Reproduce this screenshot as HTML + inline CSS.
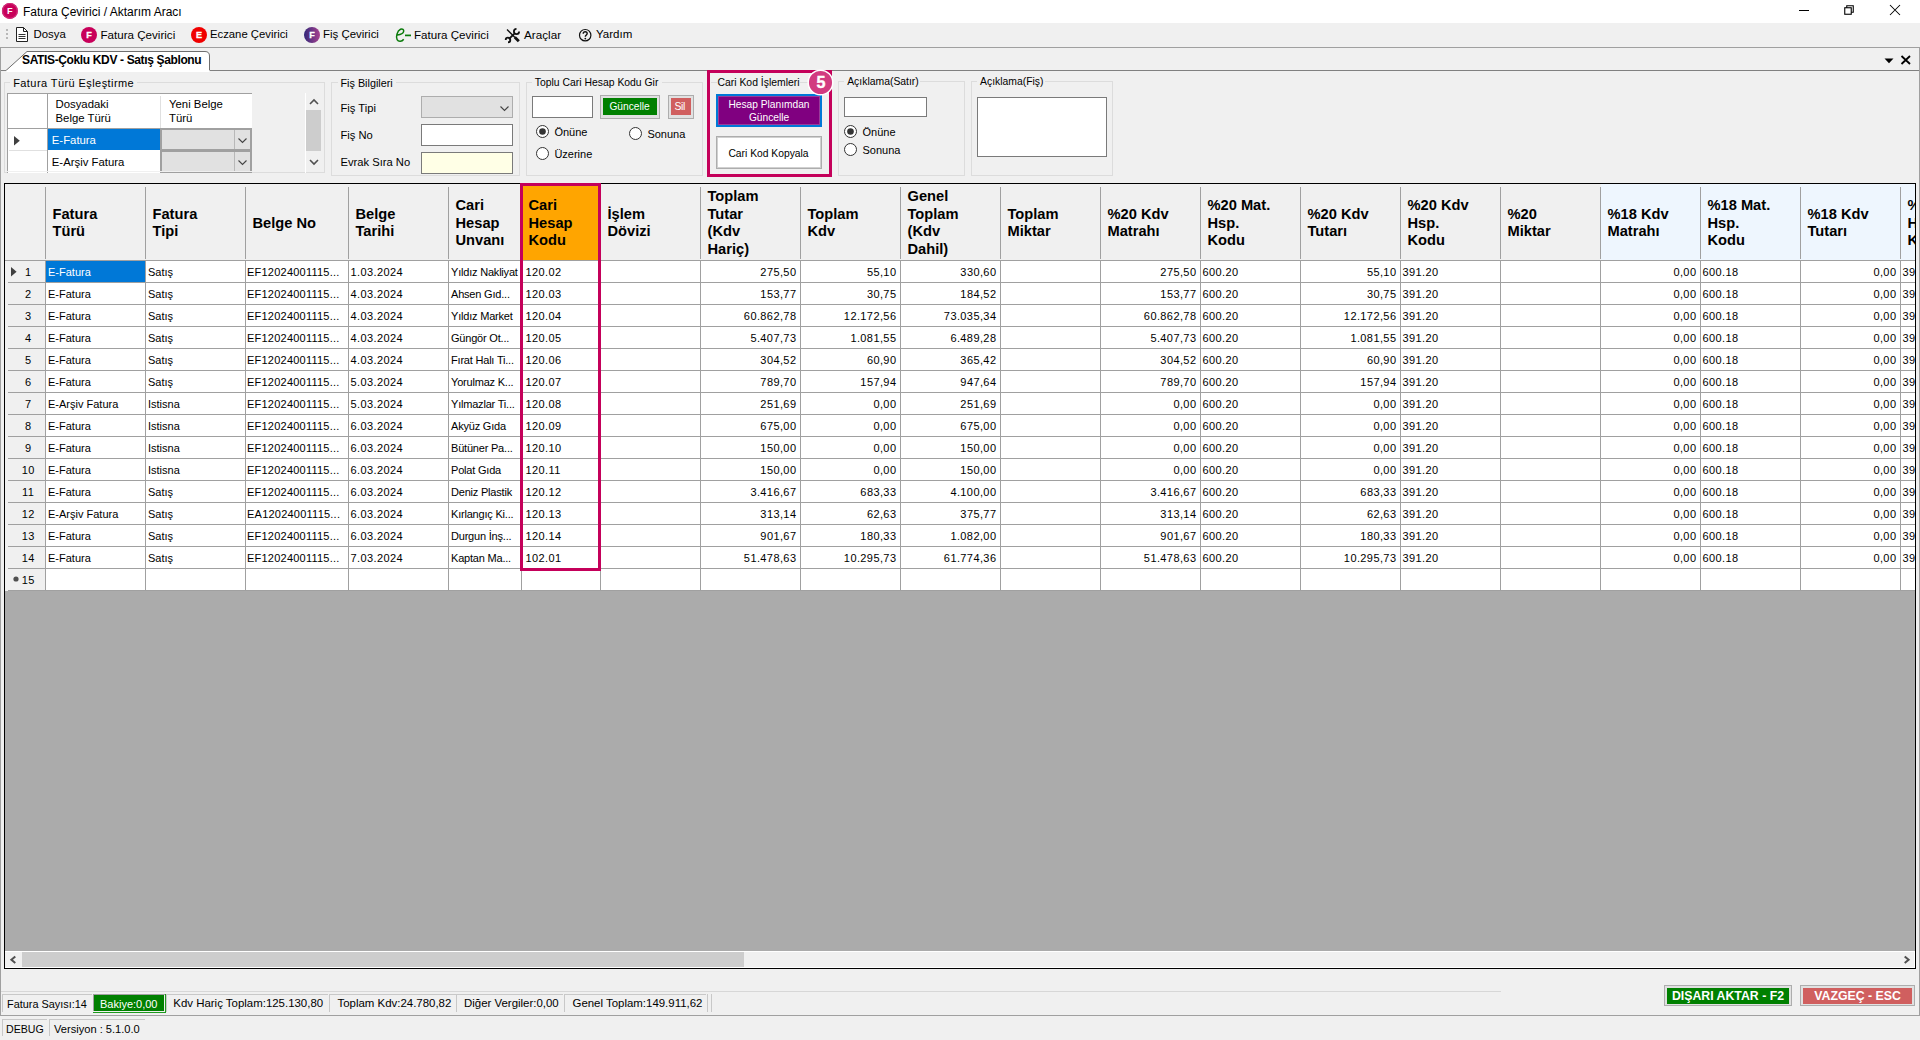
<!DOCTYPE html><html><head><meta charset='utf-8'><title>Fatura Çevirici</title><style>
html,body{margin:0;padding:0;}
body{width:1920px;height:1040px;overflow:hidden;position:relative;background:#F0F0F0;font-family:"Liberation Sans",sans-serif;color:#000;}
.a{position:absolute;}
.t{position:absolute;white-space:nowrap;}
svg{overflow:visible;}
</style></head><body>
<div class=a style='left:0px;top:0px;width:1920px;height:23px;background:#FFFFFF;'></div>
<svg class=a style='left:2px;top:2px' width='17' height='17' viewBox='0 0 17 17'><circle cx='7.9' cy='8.9' r='8' fill='#C8005A'/><circle cx='7.9' cy='8.9' r='7.4' fill='none' stroke='#D0307A' stroke-width='1.2'/><text x='7.9' y='12.3' font-family='Liberation Sans' font-weight='700' font-size='9.2' fill='#fff' text-anchor='middle'>F</text></svg>
<div class=t style='top:3.64px;font-size:12px;line-height:16px;left:23px;'>Fatura Çevirici / Aktarım Aracı</div>
<div class=a style='left:1799px;top:10px;width:10px;height:1px;background:#000;'></div>
<svg class=a style='left:1840px;top:2px' width='18' height='18' viewBox='0 0 18 18'><rect x='4.75' y='5.75' width='6.5' height='6.5' fill='none' stroke='#000' stroke-width='1.1'/><path d='M6.75 5.75V3.75H13.25V10.25H11.25' fill='none' stroke='#000' stroke-width='1.1'/></svg>
<svg class=a style='left:1886px;top:2px' width='18' height='18' viewBox='0 0 18 18'><path d='M4 3L14 13M14 3L4 13' stroke='#000' stroke-width='1.05'/></svg>
<div class=a style='left:6px;top:29px;width:2px;height:2px;background:#B8B8B8;'></div>
<div class=a style='left:6px;top:33px;width:2px;height:2px;background:#B8B8B8;'></div>
<div class=a style='left:6px;top:37px;width:2px;height:2px;background:#B8B8B8;'></div>
<svg class=a style='left:15px;top:26px' width='14' height='18' viewBox='0 0 14 18'><path d='M1.5 1.5H8.5L12.5 5.5V15.5H1.5Z' fill='#fff' stroke='#222'/><path d='M8.5 1.5V5.5H12.5' fill='none' stroke='#222'/><path d='M3.5 8.5H10.5M3.5 10.5H10.5M3.5 12.5H10.5' stroke='#333'/></svg>
<div class=t style='top:27.15px;font-size:11.4px;line-height:15px;left:33.5px;'>Dosya</div>
<svg class=a style='left:80px;top:26px' width='18' height='18' viewBox='0 0 18 18'><circle cx='9' cy='9' r='8' fill='#C8005A'/><text x='9.1' y='12.33' font-family='Liberation Sans' font-weight='700' font-size='9' fill='#fff' stroke='#fff' stroke-width='0.35' text-anchor='middle'>F</text></svg>
<div class=t style='top:27.08px;font-size:11.6px;line-height:15px;left:100.5px;'>Fatura Çevirici</div>
<svg class=a style='left:190px;top:26px' width='18' height='18' viewBox='0 0 18 18'><circle cx='9' cy='9' r='8' fill='#F00000'/><text x='9.1' y='12.33' font-family='Liberation Sans' font-weight='700' font-size='9' fill='#fff' stroke='#fff' stroke-width='0.35' text-anchor='middle'>E</text></svg>
<div class=t style='top:27.18px;font-size:11.3px;line-height:15px;left:210px;'>Eczane Çevirici</div>
<svg class=a style='left:303px;top:26px' width='18' height='18' viewBox='0 0 18 18'><defs><linearGradient id='pg' x1='0' x2='1' y1='0' y2='0'><stop offset='0' stop-color='#33287A'/><stop offset='1' stop-color='#A8428F'/></linearGradient></defs><circle cx='9' cy='9' r='8' fill='url(#pg)'/><text x='9.1' y='12.33' font-family='Liberation Sans' font-weight='700' font-size='9' fill='#fff' stroke='#fff' stroke-width='0.35' text-anchor='middle'>F</text></svg>
<div class=t style='top:27.13px;font-size:11.45px;line-height:15px;left:323px;'>Fiş Çevirici</div>
<svg class=a style='left:395px;top:26px' width='18' height='18' viewBox='0 0 18 18'><path d='M8.7 13.2C7 15.6 3.5 16 2.1 13.6C0.7 11.2 2 4.8 5.5 3.3C7.5 2.6 9.1 3.6 8.6 5.6C8.1 7.6 5.2 8.6 2.4 8.9' fill='none' stroke='#0A7A0A' stroke-width='1.5'/><path d='M10 9.4H16' stroke='#0A7A0A' stroke-width='1.7'/></svg>
<div class=t style='top:27.08px;font-size:11.6px;line-height:15px;left:414px;'>Fatura Çevirici</div>
<svg class=a style='left:505px;top:27px' width='16' height='16' viewBox='0 0 16 16'><path d='M2 2.5L10 10.5' stroke='#111' stroke-width='1.3'/><path d='M9.8 10.3L13.8 14.3' stroke='#111' stroke-width='2.8'/><path d='M3.8 12.2L9.2 6.8' stroke='#111' stroke-width='1.9'/><path d='M14.1 4.5A2.6 2.6 0 1 1 11.5 1.9' fill='none' stroke='#111' stroke-width='1.8'/><path d='M0.7 13A2.3 2.3 0 1 1 3 15.3' fill='none' stroke='#111' stroke-width='1.8'/></svg>
<div class=t style='top:27.04px;font-size:11.7px;line-height:15px;left:524px;'>Araçlar</div>
<svg class=a style='left:577px;top:27px' width='16' height='16' viewBox='0 0 16 16'><circle cx='8.2' cy='8.2' r='5.7' fill='none' stroke='#111' stroke-width='1.2'/><path d='M6.2 6.7C6.2 5.5 7 4.8 8.2 4.8S10.2 5.5 10.2 6.6C10.2 7.9 8.3 8 8.3 9.7' fill='none' stroke='#111' stroke-width='1.4'/><circle cx='8.3' cy='11.6' r='0.9' fill='#111'/></svg>
<div class=t style='top:27.11px;font-size:11.5px;line-height:15px;left:596px;'>Yardım</div>
<div class=a style='left:0px;top:47px;width:1920px;height:1px;background:#A0A0A0;'></div>
<div class=a style='left:0px;top:47px;width:1px;height:969px;background:#A0A0A0;'></div>
<div class=a style='left:1919px;top:47px;width:1px;height:969px;background:#A0A0A0;'></div>
<div class=a style='left:0px;top:1015px;width:1920px;height:1px;background:#A0A0A0;'></div>
<div class=a style='left:1px;top:70px;width:6px;height:1px;background:#808080;'></div>
<div class=a style='left:209px;top:70px;width:1710px;height:1px;background:#808080;'></div>
<svg class=a style='left:5px;top:50px' width='206' height='22' viewBox='0 0 206 22'><path d='M1 20.5L22 1.5H200Q204.5 1.5 204.5 6V20.5' fill='#fff' stroke='#6E6E6E' stroke-width='1'/><rect x='1.5' y='20' width='203' height='2' fill='#fff'/></svg>
<div class=t style='top:51.64px;font-size:12px;line-height:16px;font-weight:700;letter-spacing:-0.36px;left:22px;'>SATIS-Çoklu KDV - Satış Şablonu</div>
<svg class=a style='left:1884px;top:58px' width='10' height='6' viewBox='0 0 10 6'><path d='M0.5 0.5H9.5L5 5.2Z' fill='#000'/></svg>
<svg class=a style='left:1900px;top:55px' width='12' height='10' viewBox='0 0 12 10'><path d='M1.5 1L10 9M10 1L1.5 9' stroke='#000' stroke-width='1.8'/></svg>
<div class=a style='left:4px;top:82px;width:321px;height:91px;box-shadow:inset 0 0 0 1px #DCDCDC;'></div>
<div class=a style='left:10.2px;top:81px;width:127px;height:3px;background:#F0F0F0;'></div>
<div class=t style='top:75.59px;font-size:11px;line-height:14px;letter-spacing:0.42px;left:13.2px;'>Fatura Türü Eşleştirme</div>
<div class=a style='left:331px;top:82px;width:189px;height:94px;box-shadow:inset 0 0 0 1px #DCDCDC;'></div>
<div class=a style='left:337.5px;top:81px;width:58px;height:3px;background:#F0F0F0;'></div>
<div class=t style='top:75.76px;font-size:10.8px;line-height:14px;left:340.5px;'>Fiş Bilgileri</div>
<div class=a style='left:526px;top:82px;width:177px;height:94px;box-shadow:inset 0 0 0 1px #DCDCDC;'></div>
<div class=a style='left:531.8px;top:81px;width:130px;height:3px;background:#F0F0F0;'></div>
<div class=t style='top:75.59px;font-size:10.4px;line-height:14px;left:534.8px;'>Toplu Cari Hesap Kodu Gir</div>
<div class=a style='left:838px;top:81px;width:127px;height:95px;box-shadow:inset 0 0 0 1px #DCDCDC;'></div>
<div class=a style='left:844.2px;top:80px;width:76px;height:3px;background:#F0F0F0;'></div>
<div class=t style='top:75.49px;font-size:10.4px;line-height:14px;left:847.2px;'>Açıklama(Satır)</div>
<div class=a style='left:971px;top:81px;width:142px;height:95px;box-shadow:inset 0 0 0 1px #DCDCDC;'></div>
<div class=a style='left:977px;top:80px;width:68px;height:3px;background:#F0F0F0;'></div>
<div class=t style='top:75.49px;font-size:10.4px;line-height:14px;left:980px;'>Açıklama(Fiş)</div>
<div class=a style='left:711px;top:82px;width:6px;height:1px;background:#DCDCDC;'></div>
<div class=a style='left:800px;top:82px;width:27px;height:1px;background:#DCDCDC;'></div>
<div class=t style='top:76.19px;font-size:10.4px;line-height:14px;left:717.5px;'>Cari Kod İşlemleri</div>
<div class=a style='left:7px;top:93px;width:245px;height:80px;background:#FFFFFF;'></div>
<div class=a style='left:7px;top:93px;width:245px;height:1px;background:#A0A0A0;'></div>
<div class=a style='left:7px;top:93px;width:1px;height:80px;background:#A0A0A0;'></div>
<div class=a style='left:47px;top:94px;width:1px;height:79px;background:#A0A0A0;'></div>
<div class=a style='left:8px;top:128px;width:244px;height:1px;background:#A0A0A0;'></div>
<div class=a style='left:160px;top:96px;width:1px;height:32px;background:#E0E0E0;'></div>
<div class=a style='left:9px;top:150px;width:38px;height:1px;background:#E0E0E0;'></div>
<div class=t style='top:97.16px;font-size:11.35px;line-height:15px;left:55.5px;'>Dosyadaki</div>
<div class=t style='top:110.96px;font-size:11.35px;line-height:15px;left:55.5px;'>Belge Türü</div>
<div class=t style='top:97.16px;font-size:11.35px;line-height:15px;left:169px;'>Yeni Belge</div>
<div class=t style='top:110.96px;font-size:11.35px;line-height:15px;left:169px;'>Türü</div>
<div class=a style='left:48px;top:129px;width:112px;height:21px;background:#0078D7;'></div>
<div class=t style='top:133.16px;font-size:11.35px;line-height:15px;color:#FFFFFF;left:51.8px;'>E-Fatura</div>
<div class=t style='top:154.86px;font-size:11.35px;line-height:15px;left:51.8px;'>E-Arşiv Fatura</div>
<svg class=a style='left:14px;top:136px' width='6' height='10' viewBox='0 0 6 10'><path d='M0 0L5.8 4.8L0 9.6Z' fill='#404040'/></svg>
<div class=a style='left:160px;top:128px;width:92px;height:23px;background:#A0A0A0;'></div>
<div class=a style='left:162px;top:130px;width:88px;height:19px;background:#E1E1E1;'></div>
<div class=a style='left:234px;top:130px;width:1px;height:19px;background:#B8B8B8;'></div>
<svg class=a style='left:238px;top:137.5px' width='9' height='6' viewBox='0 0 9 6'><path d='M0.5 0.5L4.5 4.5L8.5 0.5' fill='none' stroke='#444' stroke-width='1.1'/></svg>
<div class=a style='left:160px;top:150px;width:92px;height:23px;background:#A0A0A0;'></div>
<div class=a style='left:162px;top:152px;width:88px;height:19px;background:#E1E1E1;'></div>
<div class=a style='left:234px;top:152px;width:1px;height:19px;background:#B8B8B8;'></div>
<svg class=a style='left:238px;top:159.5px' width='9' height='6' viewBox='0 0 9 6'><path d='M0.5 0.5L4.5 4.5L8.5 0.5' fill='none' stroke='#444' stroke-width='1.1'/></svg>
<div class=a style='left:7px;top:171px;width:246px;height:1px;background:#F0F0F0;'></div>
<div class=a style='left:305px;top:93px;width:17px;height:79px;background:#F0F0F0;'></div>
<div class=a style='left:305px;top:93px;width:1px;height:80px;background:#FFFFFF;'></div>
<div class=a style='left:306px;top:110px;width:15px;height:41px;background:#CDCDCD;'></div>
<svg class=a style='left:309px;top:99px' width='10' height='6' viewBox='0 0 10 6'><path d='M1 5L5 1L9 5' fill='none' stroke='#505050' stroke-width='1.6'/></svg>
<svg class=a style='left:309px;top:159px' width='10' height='6' viewBox='0 0 10 6'><path d='M1 1L5 5L9 1' fill='none' stroke='#505050' stroke-width='1.6'/></svg>
<div class=t style='top:101.32px;font-size:11.2px;line-height:15px;left:340.5px;'>Fiş Tipi</div>
<div class=t style='top:127.52px;font-size:11.2px;line-height:15px;left:340.5px;'>Fiş No</div>
<div class=t style='top:155.22px;font-size:11.2px;line-height:15px;left:340.5px;'>Evrak Sıra No</div>
<div class=a style='left:421px;top:96px;width:92px;height:22px;box-shadow:inset 0 0 0 1px #ADADAD;background:#E1E1E1;'></div>
<svg class=a style='left:500px;top:105.5px' width='10' height='6' viewBox='0 0 10 6'><path d='M0.5 0.5L4.5 4.5L8.5 0.5' fill='none' stroke='#444' stroke-width='1.1'/></svg>
<div class=a style='left:421px;top:124px;width:92px;height:22px;box-shadow:inset 0 0 0 1px #7A7A7A;background:#FFFFFF;'></div>
<div class=a style='left:421px;top:152px;width:92px;height:22px;box-shadow:inset 0 0 0 1px #7A7A7A;background:#FFFFE6;'></div>
<div class=a style='left:532px;top:96px;width:61px;height:22px;box-shadow:inset 0 0 0 1px #7A7A7A;background:#FFFFFF;'></div>
<div class=a style='left:600px;top:95px;width:60px;height:24px;box-shadow:inset 0 0 0 1px #ADADAD;background:#E1E1E1;'></div>
<div class=a style='left:603px;top:98px;width:54px;height:17px;background:#008000;'></div>
<div class=t style='top:100.36px;font-size:10.2px;line-height:13px;color:#FFFFFF;left:329.5px;width:600px;text-align:center;'>Güncelle</div>
<div class=a style='left:668px;top:95px;width:26px;height:24px;box-shadow:inset 0 0 0 1px #ADADAD;background:#E1E1E1;'></div>
<div class=a style='left:671px;top:98px;width:20px;height:17px;background:#D05F5F;'></div>
<div class=t style='top:99.79px;font-size:10.4px;line-height:14px;color:#FFFFFF;letter-spacing:-0.3px;left:379.79999999999995px;width:600px;text-align:center;'>Sil</div>
<svg class=a style='left:534.9px;top:123.80000000000001px' width='15' height='15' viewBox='0 0 15 15'><circle cx='7.5' cy='7.5' r='6' fill='#fff' stroke='#333' stroke-width='1'/><circle cx='7.5' cy='7.5' r='3.3' fill='#333'/></svg>
<div class=t style='top:124.99px;font-size:11px;line-height:14px;left:554.4px;'>Önüne</div>
<svg class=a style='left:628.0px;top:126.0px' width='15' height='15' viewBox='0 0 15 15'><circle cx='7.5' cy='7.5' r='6' fill='#fff' stroke='#333' stroke-width='1'/></svg>
<div class=t style='top:126.89px;font-size:11px;line-height:14px;left:647.4px;'>Sonuna</div>
<svg class=a style='left:534.9px;top:146.0px' width='15' height='15' viewBox='0 0 15 15'><circle cx='7.5' cy='7.5' r='6' fill='#fff' stroke='#333' stroke-width='1'/></svg>
<div class=t style='top:146.99px;font-size:11px;line-height:14px;left:554.4px;'>Üzerine</div>
<div class=a style='left:716px;top:94px;width:106px;height:33px;box-shadow:inset 0 0 0 2px #0078D7;background:#800080;'></div>
<div class=a style='left:718px;top:96px;width:102px;height:29px;background:#800080;box-shadow:inset 0 0 0 1px #9A3A9A;'></div>
<div class=t style='top:97.66px;font-size:10.2px;line-height:13px;color:#FFFFFF;left:469px;width:600px;text-align:center;'>Hesap Planımdan</div>
<div class=t style='top:111.16px;font-size:10.2px;line-height:13px;color:#FFFFFF;left:469px;width:600px;text-align:center;'>Güncelle</div>
<div class=a style='left:716px;top:136px;width:106px;height:33px;box-shadow:inset 0 0 0 1px #ADADAD;background:#FFFFFF;'></div>
<div class=a style='left:717px;top:137px;width:104px;height:31px;box-shadow:inset 0 0 0 1px #D0D0D0;'></div>
<div class=t style='top:146.83px;font-size:10.3px;line-height:13px;left:468.5px;width:600px;text-align:center;'>Cari Kod Kopyala</div>
<div class=a style='left:707px;top:70px;width:125px;height:107px;box-shadow:inset 0 0 0 3px #C4005A;'></div>
<svg class=a style='left:807px;top:69px' width='27' height='27' viewBox='0 0 27 27'><circle cx='13.5' cy='13.5' r='12.3' fill='#D23A80' stroke='#fff' stroke-width='1.5'/><text x='13.9' y='18.5' font-family='Liberation Sans' font-weight='700' font-size='16' fill='#fff' text-anchor='middle' stroke='#fff' stroke-width='0.4'>5</text></svg>
<div class=a style='left:844px;top:97px;width:83px;height:20px;box-shadow:inset 0 0 0 1px #7A7A7A;background:#FFFFFF;'></div>
<svg class=a style='left:842.8px;top:123.9px' width='15' height='15' viewBox='0 0 15 15'><circle cx='7.5' cy='7.5' r='6' fill='#fff' stroke='#333' stroke-width='1'/><circle cx='7.5' cy='7.5' r='3.3' fill='#333'/></svg>
<div class=t style='top:125.19px;font-size:11px;line-height:14px;left:862.5px;'>Önüne</div>
<svg class=a style='left:842.8px;top:141.9px' width='15' height='15' viewBox='0 0 15 15'><circle cx='7.5' cy='7.5' r='6' fill='#fff' stroke='#333' stroke-width='1'/></svg>
<div class=t style='top:143.19px;font-size:11px;line-height:14px;left:862.5px;'>Sonuna</div>
<div class=a style='left:977px;top:97px;width:130px;height:60px;box-shadow:inset 0 0 0 1px #7A7A7A;background:#FFFFFF;'></div>
<div class=a style='left:0;top:0;width:1920px;height:1040px;clip-path:inset(0 5px 72px 0)'>
<div class=a style='left:4px;top:183px;width:1912px;height:786px;background:#ABABAB;'></div>
<div class=a style='left:5px;top:184px;width:1910px;height:76px;background:#F0F0F0;'></div>
<div class=a style='left:1601px;top:184px;width:314px;height:76px;background:#EEF6FE;'></div>
<div class=a style='left:521px;top:184px;width:79px;height:76px;background:#FFA500;'></div>
<div class=t style='top:205.60px;font-size:14.67px;line-height:17.8px;font-weight:700;left:52.5px;'>Fatura</div>
<div class=t style='top:223.40px;font-size:14.67px;line-height:17.8px;font-weight:700;left:52.5px;'>Türü</div>
<div class=t style='top:205.60px;font-size:14.67px;line-height:17.8px;font-weight:700;left:152.5px;'>Fatura</div>
<div class=t style='top:223.40px;font-size:14.67px;line-height:17.8px;font-weight:700;left:152.5px;'>Tipi</div>
<div class=t style='top:214.50px;font-size:14.67px;line-height:17.8px;font-weight:700;left:252.5px;'>Belge No</div>
<div class=t style='top:205.60px;font-size:14.67px;line-height:17.8px;font-weight:700;left:355.5px;'>Belge</div>
<div class=t style='top:223.40px;font-size:14.67px;line-height:17.8px;font-weight:700;left:355.5px;'>Tarihi</div>
<div class=t style='top:196.70px;font-size:14.67px;line-height:17.8px;font-weight:700;left:455.5px;'>Cari</div>
<div class=t style='top:214.50px;font-size:14.67px;line-height:17.8px;font-weight:700;left:455.5px;'>Hesap</div>
<div class=t style='top:232.30px;font-size:14.67px;line-height:17.8px;font-weight:700;left:455.5px;'>Unvanı</div>
<div class=t style='top:196.70px;font-size:14.67px;line-height:17.8px;font-weight:700;left:528.5px;'>Cari</div>
<div class=t style='top:214.50px;font-size:14.67px;line-height:17.8px;font-weight:700;left:528.5px;'>Hesap</div>
<div class=t style='top:232.30px;font-size:14.67px;line-height:17.8px;font-weight:700;left:528.5px;'>Kodu</div>
<div class=t style='top:205.60px;font-size:14.67px;line-height:17.8px;font-weight:700;left:607.5px;'>İşlem</div>
<div class=t style='top:223.40px;font-size:14.67px;line-height:17.8px;font-weight:700;left:607.5px;'>Dövizi</div>
<div class=t style='top:187.80px;font-size:14.67px;line-height:17.8px;font-weight:700;left:707.5px;'>Toplam</div>
<div class=t style='top:205.60px;font-size:14.67px;line-height:17.8px;font-weight:700;left:707.5px;'>Tutar</div>
<div class=t style='top:223.40px;font-size:14.67px;line-height:17.8px;font-weight:700;left:707.5px;'>(Kdv</div>
<div class=t style='top:241.20px;font-size:14.67px;line-height:17.8px;font-weight:700;left:707.5px;'>Hariç)</div>
<div class=t style='top:205.60px;font-size:14.67px;line-height:17.8px;font-weight:700;left:807.5px;'>Toplam</div>
<div class=t style='top:223.40px;font-size:14.67px;line-height:17.8px;font-weight:700;left:807.5px;'>Kdv</div>
<div class=t style='top:187.80px;font-size:14.67px;line-height:17.8px;font-weight:700;left:907.5px;'>Genel</div>
<div class=t style='top:205.60px;font-size:14.67px;line-height:17.8px;font-weight:700;left:907.5px;'>Toplam</div>
<div class=t style='top:223.40px;font-size:14.67px;line-height:17.8px;font-weight:700;left:907.5px;'>(Kdv</div>
<div class=t style='top:241.20px;font-size:14.67px;line-height:17.8px;font-weight:700;left:907.5px;'>Dahil)</div>
<div class=t style='top:205.60px;font-size:14.67px;line-height:17.8px;font-weight:700;left:1007.5px;'>Toplam</div>
<div class=t style='top:223.40px;font-size:14.67px;line-height:17.8px;font-weight:700;left:1007.5px;'>Miktar</div>
<div class=t style='top:205.60px;font-size:14.67px;line-height:17.8px;font-weight:700;left:1107.5px;'>%20 Kdv</div>
<div class=t style='top:223.40px;font-size:14.67px;line-height:17.8px;font-weight:700;left:1107.5px;'>Matrahı</div>
<div class=t style='top:196.70px;font-size:14.67px;line-height:17.8px;font-weight:700;left:1207.5px;'>%20 Mat.</div>
<div class=t style='top:214.50px;font-size:14.67px;line-height:17.8px;font-weight:700;left:1207.5px;'>Hsp.</div>
<div class=t style='top:232.30px;font-size:14.67px;line-height:17.8px;font-weight:700;left:1207.5px;'>Kodu</div>
<div class=t style='top:205.60px;font-size:14.67px;line-height:17.8px;font-weight:700;left:1307.5px;'>%20 Kdv</div>
<div class=t style='top:223.40px;font-size:14.67px;line-height:17.8px;font-weight:700;left:1307.5px;'>Tutarı</div>
<div class=t style='top:196.70px;font-size:14.67px;line-height:17.8px;font-weight:700;left:1407.5px;'>%20 Kdv</div>
<div class=t style='top:214.50px;font-size:14.67px;line-height:17.8px;font-weight:700;left:1407.5px;'>Hsp.</div>
<div class=t style='top:232.30px;font-size:14.67px;line-height:17.8px;font-weight:700;left:1407.5px;'>Kodu</div>
<div class=t style='top:205.60px;font-size:14.67px;line-height:17.8px;font-weight:700;left:1507.5px;'>%20</div>
<div class=t style='top:223.40px;font-size:14.67px;line-height:17.8px;font-weight:700;left:1507.5px;'>Miktar</div>
<div class=t style='top:205.60px;font-size:14.67px;line-height:17.8px;font-weight:700;left:1607.5px;'>%18 Kdv</div>
<div class=t style='top:223.40px;font-size:14.67px;line-height:17.8px;font-weight:700;left:1607.5px;'>Matrahı</div>
<div class=t style='top:196.70px;font-size:14.67px;line-height:17.8px;font-weight:700;left:1707.5px;'>%18 Mat.</div>
<div class=t style='top:214.50px;font-size:14.67px;line-height:17.8px;font-weight:700;left:1707.5px;'>Hsp.</div>
<div class=t style='top:232.30px;font-size:14.67px;line-height:17.8px;font-weight:700;left:1707.5px;'>Kodu</div>
<div class=t style='top:205.60px;font-size:14.67px;line-height:17.8px;font-weight:700;left:1807.5px;'>%18 Kdv</div>
<div class=t style='top:223.40px;font-size:14.67px;line-height:17.8px;font-weight:700;left:1807.5px;'>Tutarı</div>
<div class=t style='top:196.70px;font-size:14.67px;line-height:17.8px;font-weight:700;left:1907.5px;'>%18 Kdv</div>
<div class=t style='top:214.50px;font-size:14.67px;line-height:17.8px;font-weight:700;left:1907.5px;'>Hsp.</div>
<div class=t style='top:232.30px;font-size:14.67px;line-height:17.8px;font-weight:700;left:1907.5px;'>Kodu</div>
<div class=a style='left:45px;top:187px;width:1px;height:72px;background:#A0A0A0;'></div>
<div class=a style='left:145px;top:187px;width:1px;height:72px;background:#A0A0A0;'></div>
<div class=a style='left:245px;top:187px;width:1px;height:72px;background:#A0A0A0;'></div>
<div class=a style='left:348px;top:187px;width:1px;height:72px;background:#A0A0A0;'></div>
<div class=a style='left:448px;top:187px;width:1px;height:72px;background:#A0A0A0;'></div>
<div class=a style='left:521px;top:187px;width:1px;height:72px;background:#A0A0A0;'></div>
<div class=a style='left:600px;top:187px;width:1px;height:72px;background:#A0A0A0;'></div>
<div class=a style='left:700px;top:187px;width:1px;height:72px;background:#A0A0A0;'></div>
<div class=a style='left:800px;top:187px;width:1px;height:72px;background:#A0A0A0;'></div>
<div class=a style='left:900px;top:187px;width:1px;height:72px;background:#A0A0A0;'></div>
<div class=a style='left:1000px;top:187px;width:1px;height:72px;background:#A0A0A0;'></div>
<div class=a style='left:1100px;top:187px;width:1px;height:72px;background:#A0A0A0;'></div>
<div class=a style='left:1200px;top:187px;width:1px;height:72px;background:#A0A0A0;'></div>
<div class=a style='left:1300px;top:187px;width:1px;height:72px;background:#A0A0A0;'></div>
<div class=a style='left:1400px;top:187px;width:1px;height:72px;background:#A0A0A0;'></div>
<div class=a style='left:1500px;top:187px;width:1px;height:72px;background:#A0A0A0;'></div>
<div class=a style='left:1600px;top:187px;width:1px;height:72px;background:#A0A0A0;'></div>
<div class=a style='left:1700px;top:187px;width:1px;height:72px;background:#A0A0A0;'></div>
<div class=a style='left:1800px;top:187px;width:1px;height:72px;background:#A0A0A0;'></div>
<div class=a style='left:1900px;top:187px;width:1px;height:72px;background:#A0A0A0;'></div>
<div class=a style='left:5px;top:260px;width:1910px;height:1px;background:#A0A0A0;'></div>
<div class=a style='left:5px;top:261px;width:1910px;height:330px;background:#FFFFFF;'></div>
<div class=a style='left:5px;top:261px;width:40px;height:330px;background:#F0F0F0;'></div>
<div class=a style='left:46px;top:261px;width:99px;height:21px;background:#0078D7;'></div>
<div class=a style='left:46px;top:282px;width:1869px;height:1px;background:#A0A0A0;'></div>
<div class=a style='left:8px;top:282px;width:37px;height:1px;background:#A0A0A0;'></div>
<div class=a style='left:46px;top:304px;width:1869px;height:1px;background:#A0A0A0;'></div>
<div class=a style='left:8px;top:304px;width:37px;height:1px;background:#A0A0A0;'></div>
<div class=a style='left:46px;top:326px;width:1869px;height:1px;background:#A0A0A0;'></div>
<div class=a style='left:8px;top:326px;width:37px;height:1px;background:#A0A0A0;'></div>
<div class=a style='left:46px;top:348px;width:1869px;height:1px;background:#A0A0A0;'></div>
<div class=a style='left:8px;top:348px;width:37px;height:1px;background:#A0A0A0;'></div>
<div class=a style='left:46px;top:370px;width:1869px;height:1px;background:#A0A0A0;'></div>
<div class=a style='left:8px;top:370px;width:37px;height:1px;background:#A0A0A0;'></div>
<div class=a style='left:46px;top:392px;width:1869px;height:1px;background:#A0A0A0;'></div>
<div class=a style='left:8px;top:392px;width:37px;height:1px;background:#A0A0A0;'></div>
<div class=a style='left:46px;top:414px;width:1869px;height:1px;background:#A0A0A0;'></div>
<div class=a style='left:8px;top:414px;width:37px;height:1px;background:#A0A0A0;'></div>
<div class=a style='left:46px;top:436px;width:1869px;height:1px;background:#A0A0A0;'></div>
<div class=a style='left:8px;top:436px;width:37px;height:1px;background:#A0A0A0;'></div>
<div class=a style='left:46px;top:458px;width:1869px;height:1px;background:#A0A0A0;'></div>
<div class=a style='left:8px;top:458px;width:37px;height:1px;background:#A0A0A0;'></div>
<div class=a style='left:46px;top:480px;width:1869px;height:1px;background:#A0A0A0;'></div>
<div class=a style='left:8px;top:480px;width:37px;height:1px;background:#A0A0A0;'></div>
<div class=a style='left:46px;top:502px;width:1869px;height:1px;background:#A0A0A0;'></div>
<div class=a style='left:8px;top:502px;width:37px;height:1px;background:#A0A0A0;'></div>
<div class=a style='left:46px;top:524px;width:1869px;height:1px;background:#A0A0A0;'></div>
<div class=a style='left:8px;top:524px;width:37px;height:1px;background:#A0A0A0;'></div>
<div class=a style='left:46px;top:546px;width:1869px;height:1px;background:#A0A0A0;'></div>
<div class=a style='left:8px;top:546px;width:37px;height:1px;background:#A0A0A0;'></div>
<div class=a style='left:46px;top:568px;width:1869px;height:1px;background:#A0A0A0;'></div>
<div class=a style='left:8px;top:568px;width:37px;height:1px;background:#A0A0A0;'></div>
<div class=a style='left:46px;top:590px;width:1869px;height:1px;background:#A0A0A0;'></div>
<div class=a style='left:8px;top:590px;width:37px;height:1px;background:#A0A0A0;'></div>
<div class=a style='left:45px;top:261px;width:1px;height:330px;background:#A0A0A0;'></div>
<div class=a style='left:145px;top:261px;width:1px;height:330px;background:#A0A0A0;'></div>
<div class=a style='left:245px;top:261px;width:1px;height:330px;background:#A0A0A0;'></div>
<div class=a style='left:348px;top:261px;width:1px;height:330px;background:#A0A0A0;'></div>
<div class=a style='left:448px;top:261px;width:1px;height:330px;background:#A0A0A0;'></div>
<div class=a style='left:521px;top:261px;width:1px;height:330px;background:#A0A0A0;'></div>
<div class=a style='left:600px;top:261px;width:1px;height:330px;background:#A0A0A0;'></div>
<div class=a style='left:700px;top:261px;width:1px;height:330px;background:#A0A0A0;'></div>
<div class=a style='left:800px;top:261px;width:1px;height:330px;background:#A0A0A0;'></div>
<div class=a style='left:900px;top:261px;width:1px;height:330px;background:#A0A0A0;'></div>
<div class=a style='left:1000px;top:261px;width:1px;height:330px;background:#A0A0A0;'></div>
<div class=a style='left:1100px;top:261px;width:1px;height:330px;background:#A0A0A0;'></div>
<div class=a style='left:1200px;top:261px;width:1px;height:330px;background:#A0A0A0;'></div>
<div class=a style='left:1300px;top:261px;width:1px;height:330px;background:#A0A0A0;'></div>
<div class=a style='left:1400px;top:261px;width:1px;height:330px;background:#A0A0A0;'></div>
<div class=a style='left:1500px;top:261px;width:1px;height:330px;background:#A0A0A0;'></div>
<div class=a style='left:1600px;top:261px;width:1px;height:330px;background:#A0A0A0;'></div>
<div class=a style='left:1700px;top:261px;width:1px;height:330px;background:#A0A0A0;'></div>
<div class=a style='left:1800px;top:261px;width:1px;height:330px;background:#A0A0A0;'></div>
<div class=a style='left:1900px;top:261px;width:1px;height:330px;background:#A0A0A0;'></div>
<div class=t style='top:264.99px;font-size:11px;line-height:14px;letter-spacing:0.4px;left:-271.8px;width:600px;text-align:center;'>1</div>
<div class=t style='top:264.99px;font-size:11px;line-height:14px;color:#FFFFFF;left:48px;'>E-Fatura</div>
<div class=t style='top:264.99px;font-size:11px;line-height:14px;left:148px;'>Satış</div>
<div class=t style='top:264.99px;font-size:11px;line-height:14px;letter-spacing:0.23px;left:247px;'>EF12024001115...</div>
<div class=t style='top:264.99px;font-size:11px;line-height:14px;letter-spacing:0.4px;left:350.5px;'>1.03.2024</div>
<div class=t style='top:264.99px;font-size:11px;line-height:14px;letter-spacing:-0.2px;left:451px;'>Yıldız Nakliyat</div>
<div class=t style='top:264.99px;font-size:11px;line-height:14px;letter-spacing:0.4px;left:525.5px;'>120.02</div>
<div class=t style='top:264.99px;font-size:11px;line-height:14px;letter-spacing:0.4px;right:1123.6px;'>275,50</div>
<div class=t style='top:264.99px;font-size:11px;line-height:14px;letter-spacing:0.4px;right:1023.6px;'>55,10</div>
<div class=t style='top:264.99px;font-size:11px;line-height:14px;letter-spacing:0.4px;right:923.6px;'>330,60</div>
<div class=t style='top:264.99px;font-size:11px;line-height:14px;letter-spacing:0.4px;right:723.5999999999999px;'>275,50</div>
<div class=t style='top:264.99px;font-size:11px;line-height:14px;letter-spacing:0.4px;left:1202.5px;'>600.20</div>
<div class=t style='top:264.99px;font-size:11px;line-height:14px;letter-spacing:0.4px;right:523.5999999999999px;'>55,10</div>
<div class=t style='top:264.99px;font-size:11px;line-height:14px;letter-spacing:0.4px;left:1402.5px;'>391.20</div>
<div class=t style='top:264.99px;font-size:11px;line-height:14px;letter-spacing:0.4px;right:223.5999999999999px;'>0,00</div>
<div class=t style='top:264.99px;font-size:11px;line-height:14px;letter-spacing:0.4px;left:1702.5px;'>600.18</div>
<div class=t style='top:264.99px;font-size:11px;line-height:14px;letter-spacing:0.4px;right:23.59999999999991px;'>0,00</div>
<div class=t style='top:264.99px;font-size:11px;line-height:14px;letter-spacing:0.4px;left:1902.5px;'>39</div>
<div class=t style='top:286.99px;font-size:11px;line-height:14px;letter-spacing:0.4px;left:-271.8px;width:600px;text-align:center;'>2</div>
<div class=t style='top:286.99px;font-size:11px;line-height:14px;left:48px;'>E-Fatura</div>
<div class=t style='top:286.99px;font-size:11px;line-height:14px;left:148px;'>Satış</div>
<div class=t style='top:286.99px;font-size:11px;line-height:14px;letter-spacing:0.23px;left:247px;'>EF12024001115...</div>
<div class=t style='top:286.99px;font-size:11px;line-height:14px;letter-spacing:0.4px;left:350.5px;'>4.03.2024</div>
<div class=t style='top:286.99px;font-size:11px;line-height:14px;letter-spacing:-0.2px;left:451px;'>Ahsen Gıd...</div>
<div class=t style='top:286.99px;font-size:11px;line-height:14px;letter-spacing:0.4px;left:525.5px;'>120.03</div>
<div class=t style='top:286.99px;font-size:11px;line-height:14px;letter-spacing:0.4px;right:1123.6px;'>153,77</div>
<div class=t style='top:286.99px;font-size:11px;line-height:14px;letter-spacing:0.4px;right:1023.6px;'>30,75</div>
<div class=t style='top:286.99px;font-size:11px;line-height:14px;letter-spacing:0.4px;right:923.6px;'>184,52</div>
<div class=t style='top:286.99px;font-size:11px;line-height:14px;letter-spacing:0.4px;right:723.5999999999999px;'>153,77</div>
<div class=t style='top:286.99px;font-size:11px;line-height:14px;letter-spacing:0.4px;left:1202.5px;'>600.20</div>
<div class=t style='top:286.99px;font-size:11px;line-height:14px;letter-spacing:0.4px;right:523.5999999999999px;'>30,75</div>
<div class=t style='top:286.99px;font-size:11px;line-height:14px;letter-spacing:0.4px;left:1402.5px;'>391.20</div>
<div class=t style='top:286.99px;font-size:11px;line-height:14px;letter-spacing:0.4px;right:223.5999999999999px;'>0,00</div>
<div class=t style='top:286.99px;font-size:11px;line-height:14px;letter-spacing:0.4px;left:1702.5px;'>600.18</div>
<div class=t style='top:286.99px;font-size:11px;line-height:14px;letter-spacing:0.4px;right:23.59999999999991px;'>0,00</div>
<div class=t style='top:286.99px;font-size:11px;line-height:14px;letter-spacing:0.4px;left:1902.5px;'>39</div>
<div class=t style='top:308.99px;font-size:11px;line-height:14px;letter-spacing:0.4px;left:-271.8px;width:600px;text-align:center;'>3</div>
<div class=t style='top:308.99px;font-size:11px;line-height:14px;left:48px;'>E-Fatura</div>
<div class=t style='top:308.99px;font-size:11px;line-height:14px;left:148px;'>Satış</div>
<div class=t style='top:308.99px;font-size:11px;line-height:14px;letter-spacing:0.23px;left:247px;'>EF12024001115...</div>
<div class=t style='top:308.99px;font-size:11px;line-height:14px;letter-spacing:0.4px;left:350.5px;'>4.03.2024</div>
<div class=t style='top:308.99px;font-size:11px;line-height:14px;letter-spacing:-0.2px;left:451px;'>Yıldız Market</div>
<div class=t style='top:308.99px;font-size:11px;line-height:14px;letter-spacing:0.4px;left:525.5px;'>120.04</div>
<div class=t style='top:308.99px;font-size:11px;line-height:14px;letter-spacing:0.4px;right:1123.6px;'>60.862,78</div>
<div class=t style='top:308.99px;font-size:11px;line-height:14px;letter-spacing:0.4px;right:1023.6px;'>12.172,56</div>
<div class=t style='top:308.99px;font-size:11px;line-height:14px;letter-spacing:0.4px;right:923.6px;'>73.035,34</div>
<div class=t style='top:308.99px;font-size:11px;line-height:14px;letter-spacing:0.4px;right:723.5999999999999px;'>60.862,78</div>
<div class=t style='top:308.99px;font-size:11px;line-height:14px;letter-spacing:0.4px;left:1202.5px;'>600.20</div>
<div class=t style='top:308.99px;font-size:11px;line-height:14px;letter-spacing:0.4px;right:523.5999999999999px;'>12.172,56</div>
<div class=t style='top:308.99px;font-size:11px;line-height:14px;letter-spacing:0.4px;left:1402.5px;'>391.20</div>
<div class=t style='top:308.99px;font-size:11px;line-height:14px;letter-spacing:0.4px;right:223.5999999999999px;'>0,00</div>
<div class=t style='top:308.99px;font-size:11px;line-height:14px;letter-spacing:0.4px;left:1702.5px;'>600.18</div>
<div class=t style='top:308.99px;font-size:11px;line-height:14px;letter-spacing:0.4px;right:23.59999999999991px;'>0,00</div>
<div class=t style='top:308.99px;font-size:11px;line-height:14px;letter-spacing:0.4px;left:1902.5px;'>39</div>
<div class=t style='top:330.99px;font-size:11px;line-height:14px;letter-spacing:0.4px;left:-271.8px;width:600px;text-align:center;'>4</div>
<div class=t style='top:330.99px;font-size:11px;line-height:14px;left:48px;'>E-Fatura</div>
<div class=t style='top:330.99px;font-size:11px;line-height:14px;left:148px;'>Satış</div>
<div class=t style='top:330.99px;font-size:11px;line-height:14px;letter-spacing:0.23px;left:247px;'>EF12024001115...</div>
<div class=t style='top:330.99px;font-size:11px;line-height:14px;letter-spacing:0.4px;left:350.5px;'>4.03.2024</div>
<div class=t style='top:330.99px;font-size:11px;line-height:14px;letter-spacing:-0.2px;left:451px;'>Güngör Ot...</div>
<div class=t style='top:330.99px;font-size:11px;line-height:14px;letter-spacing:0.4px;left:525.5px;'>120.05</div>
<div class=t style='top:330.99px;font-size:11px;line-height:14px;letter-spacing:0.4px;right:1123.6px;'>5.407,73</div>
<div class=t style='top:330.99px;font-size:11px;line-height:14px;letter-spacing:0.4px;right:1023.6px;'>1.081,55</div>
<div class=t style='top:330.99px;font-size:11px;line-height:14px;letter-spacing:0.4px;right:923.6px;'>6.489,28</div>
<div class=t style='top:330.99px;font-size:11px;line-height:14px;letter-spacing:0.4px;right:723.5999999999999px;'>5.407,73</div>
<div class=t style='top:330.99px;font-size:11px;line-height:14px;letter-spacing:0.4px;left:1202.5px;'>600.20</div>
<div class=t style='top:330.99px;font-size:11px;line-height:14px;letter-spacing:0.4px;right:523.5999999999999px;'>1.081,55</div>
<div class=t style='top:330.99px;font-size:11px;line-height:14px;letter-spacing:0.4px;left:1402.5px;'>391.20</div>
<div class=t style='top:330.99px;font-size:11px;line-height:14px;letter-spacing:0.4px;right:223.5999999999999px;'>0,00</div>
<div class=t style='top:330.99px;font-size:11px;line-height:14px;letter-spacing:0.4px;left:1702.5px;'>600.18</div>
<div class=t style='top:330.99px;font-size:11px;line-height:14px;letter-spacing:0.4px;right:23.59999999999991px;'>0,00</div>
<div class=t style='top:330.99px;font-size:11px;line-height:14px;letter-spacing:0.4px;left:1902.5px;'>39</div>
<div class=t style='top:352.99px;font-size:11px;line-height:14px;letter-spacing:0.4px;left:-271.8px;width:600px;text-align:center;'>5</div>
<div class=t style='top:352.99px;font-size:11px;line-height:14px;left:48px;'>E-Fatura</div>
<div class=t style='top:352.99px;font-size:11px;line-height:14px;left:148px;'>Satış</div>
<div class=t style='top:352.99px;font-size:11px;line-height:14px;letter-spacing:0.23px;left:247px;'>EF12024001115...</div>
<div class=t style='top:352.99px;font-size:11px;line-height:14px;letter-spacing:0.4px;left:350.5px;'>4.03.2024</div>
<div class=t style='top:352.99px;font-size:11px;line-height:14px;letter-spacing:-0.2px;left:451px;'>Fırat Halı Ti...</div>
<div class=t style='top:352.99px;font-size:11px;line-height:14px;letter-spacing:0.4px;left:525.5px;'>120.06</div>
<div class=t style='top:352.99px;font-size:11px;line-height:14px;letter-spacing:0.4px;right:1123.6px;'>304,52</div>
<div class=t style='top:352.99px;font-size:11px;line-height:14px;letter-spacing:0.4px;right:1023.6px;'>60,90</div>
<div class=t style='top:352.99px;font-size:11px;line-height:14px;letter-spacing:0.4px;right:923.6px;'>365,42</div>
<div class=t style='top:352.99px;font-size:11px;line-height:14px;letter-spacing:0.4px;right:723.5999999999999px;'>304,52</div>
<div class=t style='top:352.99px;font-size:11px;line-height:14px;letter-spacing:0.4px;left:1202.5px;'>600.20</div>
<div class=t style='top:352.99px;font-size:11px;line-height:14px;letter-spacing:0.4px;right:523.5999999999999px;'>60,90</div>
<div class=t style='top:352.99px;font-size:11px;line-height:14px;letter-spacing:0.4px;left:1402.5px;'>391.20</div>
<div class=t style='top:352.99px;font-size:11px;line-height:14px;letter-spacing:0.4px;right:223.5999999999999px;'>0,00</div>
<div class=t style='top:352.99px;font-size:11px;line-height:14px;letter-spacing:0.4px;left:1702.5px;'>600.18</div>
<div class=t style='top:352.99px;font-size:11px;line-height:14px;letter-spacing:0.4px;right:23.59999999999991px;'>0,00</div>
<div class=t style='top:352.99px;font-size:11px;line-height:14px;letter-spacing:0.4px;left:1902.5px;'>39</div>
<div class=t style='top:374.99px;font-size:11px;line-height:14px;letter-spacing:0.4px;left:-271.8px;width:600px;text-align:center;'>6</div>
<div class=t style='top:374.99px;font-size:11px;line-height:14px;left:48px;'>E-Fatura</div>
<div class=t style='top:374.99px;font-size:11px;line-height:14px;left:148px;'>Satış</div>
<div class=t style='top:374.99px;font-size:11px;line-height:14px;letter-spacing:0.23px;left:247px;'>EF12024001115...</div>
<div class=t style='top:374.99px;font-size:11px;line-height:14px;letter-spacing:0.4px;left:350.5px;'>5.03.2024</div>
<div class=t style='top:374.99px;font-size:11px;line-height:14px;letter-spacing:-0.2px;left:451px;'>Yorulmaz K...</div>
<div class=t style='top:374.99px;font-size:11px;line-height:14px;letter-spacing:0.4px;left:525.5px;'>120.07</div>
<div class=t style='top:374.99px;font-size:11px;line-height:14px;letter-spacing:0.4px;right:1123.6px;'>789,70</div>
<div class=t style='top:374.99px;font-size:11px;line-height:14px;letter-spacing:0.4px;right:1023.6px;'>157,94</div>
<div class=t style='top:374.99px;font-size:11px;line-height:14px;letter-spacing:0.4px;right:923.6px;'>947,64</div>
<div class=t style='top:374.99px;font-size:11px;line-height:14px;letter-spacing:0.4px;right:723.5999999999999px;'>789,70</div>
<div class=t style='top:374.99px;font-size:11px;line-height:14px;letter-spacing:0.4px;left:1202.5px;'>600.20</div>
<div class=t style='top:374.99px;font-size:11px;line-height:14px;letter-spacing:0.4px;right:523.5999999999999px;'>157,94</div>
<div class=t style='top:374.99px;font-size:11px;line-height:14px;letter-spacing:0.4px;left:1402.5px;'>391.20</div>
<div class=t style='top:374.99px;font-size:11px;line-height:14px;letter-spacing:0.4px;right:223.5999999999999px;'>0,00</div>
<div class=t style='top:374.99px;font-size:11px;line-height:14px;letter-spacing:0.4px;left:1702.5px;'>600.18</div>
<div class=t style='top:374.99px;font-size:11px;line-height:14px;letter-spacing:0.4px;right:23.59999999999991px;'>0,00</div>
<div class=t style='top:374.99px;font-size:11px;line-height:14px;letter-spacing:0.4px;left:1902.5px;'>39</div>
<div class=t style='top:396.99px;font-size:11px;line-height:14px;letter-spacing:0.4px;left:-271.8px;width:600px;text-align:center;'>7</div>
<div class=t style='top:396.99px;font-size:11px;line-height:14px;left:48px;'>E-Arşiv Fatura</div>
<div class=t style='top:396.99px;font-size:11px;line-height:14px;left:148px;'>Istisna</div>
<div class=t style='top:396.99px;font-size:11px;line-height:14px;letter-spacing:0.23px;left:247px;'>EF12024001115...</div>
<div class=t style='top:396.99px;font-size:11px;line-height:14px;letter-spacing:0.4px;left:350.5px;'>5.03.2024</div>
<div class=t style='top:396.99px;font-size:11px;line-height:14px;letter-spacing:-0.2px;left:451px;'>Yılmazlar Ti...</div>
<div class=t style='top:396.99px;font-size:11px;line-height:14px;letter-spacing:0.4px;left:525.5px;'>120.08</div>
<div class=t style='top:396.99px;font-size:11px;line-height:14px;letter-spacing:0.4px;right:1123.6px;'>251,69</div>
<div class=t style='top:396.99px;font-size:11px;line-height:14px;letter-spacing:0.4px;right:1023.6px;'>0,00</div>
<div class=t style='top:396.99px;font-size:11px;line-height:14px;letter-spacing:0.4px;right:923.6px;'>251,69</div>
<div class=t style='top:396.99px;font-size:11px;line-height:14px;letter-spacing:0.4px;right:723.5999999999999px;'>0,00</div>
<div class=t style='top:396.99px;font-size:11px;line-height:14px;letter-spacing:0.4px;left:1202.5px;'>600.20</div>
<div class=t style='top:396.99px;font-size:11px;line-height:14px;letter-spacing:0.4px;right:523.5999999999999px;'>0,00</div>
<div class=t style='top:396.99px;font-size:11px;line-height:14px;letter-spacing:0.4px;left:1402.5px;'>391.20</div>
<div class=t style='top:396.99px;font-size:11px;line-height:14px;letter-spacing:0.4px;right:223.5999999999999px;'>0,00</div>
<div class=t style='top:396.99px;font-size:11px;line-height:14px;letter-spacing:0.4px;left:1702.5px;'>600.18</div>
<div class=t style='top:396.99px;font-size:11px;line-height:14px;letter-spacing:0.4px;right:23.59999999999991px;'>0,00</div>
<div class=t style='top:396.99px;font-size:11px;line-height:14px;letter-spacing:0.4px;left:1902.5px;'>39</div>
<div class=t style='top:418.99px;font-size:11px;line-height:14px;letter-spacing:0.4px;left:-271.8px;width:600px;text-align:center;'>8</div>
<div class=t style='top:418.99px;font-size:11px;line-height:14px;left:48px;'>E-Fatura</div>
<div class=t style='top:418.99px;font-size:11px;line-height:14px;left:148px;'>Istisna</div>
<div class=t style='top:418.99px;font-size:11px;line-height:14px;letter-spacing:0.23px;left:247px;'>EF12024001115...</div>
<div class=t style='top:418.99px;font-size:11px;line-height:14px;letter-spacing:0.4px;left:350.5px;'>6.03.2024</div>
<div class=t style='top:418.99px;font-size:11px;line-height:14px;letter-spacing:-0.2px;left:451px;'>Akyüz Gıda</div>
<div class=t style='top:418.99px;font-size:11px;line-height:14px;letter-spacing:0.4px;left:525.5px;'>120.09</div>
<div class=t style='top:418.99px;font-size:11px;line-height:14px;letter-spacing:0.4px;right:1123.6px;'>675,00</div>
<div class=t style='top:418.99px;font-size:11px;line-height:14px;letter-spacing:0.4px;right:1023.6px;'>0,00</div>
<div class=t style='top:418.99px;font-size:11px;line-height:14px;letter-spacing:0.4px;right:923.6px;'>675,00</div>
<div class=t style='top:418.99px;font-size:11px;line-height:14px;letter-spacing:0.4px;right:723.5999999999999px;'>0,00</div>
<div class=t style='top:418.99px;font-size:11px;line-height:14px;letter-spacing:0.4px;left:1202.5px;'>600.20</div>
<div class=t style='top:418.99px;font-size:11px;line-height:14px;letter-spacing:0.4px;right:523.5999999999999px;'>0,00</div>
<div class=t style='top:418.99px;font-size:11px;line-height:14px;letter-spacing:0.4px;left:1402.5px;'>391.20</div>
<div class=t style='top:418.99px;font-size:11px;line-height:14px;letter-spacing:0.4px;right:223.5999999999999px;'>0,00</div>
<div class=t style='top:418.99px;font-size:11px;line-height:14px;letter-spacing:0.4px;left:1702.5px;'>600.18</div>
<div class=t style='top:418.99px;font-size:11px;line-height:14px;letter-spacing:0.4px;right:23.59999999999991px;'>0,00</div>
<div class=t style='top:418.99px;font-size:11px;line-height:14px;letter-spacing:0.4px;left:1902.5px;'>39</div>
<div class=t style='top:440.99px;font-size:11px;line-height:14px;letter-spacing:0.4px;left:-271.8px;width:600px;text-align:center;'>9</div>
<div class=t style='top:440.99px;font-size:11px;line-height:14px;left:48px;'>E-Fatura</div>
<div class=t style='top:440.99px;font-size:11px;line-height:14px;left:148px;'>Istisna</div>
<div class=t style='top:440.99px;font-size:11px;line-height:14px;letter-spacing:0.23px;left:247px;'>EF12024001115...</div>
<div class=t style='top:440.99px;font-size:11px;line-height:14px;letter-spacing:0.4px;left:350.5px;'>6.03.2024</div>
<div class=t style='top:440.99px;font-size:11px;line-height:14px;letter-spacing:-0.2px;left:451px;'>Bütüner Pa...</div>
<div class=t style='top:440.99px;font-size:11px;line-height:14px;letter-spacing:0.4px;left:525.5px;'>120.10</div>
<div class=t style='top:440.99px;font-size:11px;line-height:14px;letter-spacing:0.4px;right:1123.6px;'>150,00</div>
<div class=t style='top:440.99px;font-size:11px;line-height:14px;letter-spacing:0.4px;right:1023.6px;'>0,00</div>
<div class=t style='top:440.99px;font-size:11px;line-height:14px;letter-spacing:0.4px;right:923.6px;'>150,00</div>
<div class=t style='top:440.99px;font-size:11px;line-height:14px;letter-spacing:0.4px;right:723.5999999999999px;'>0,00</div>
<div class=t style='top:440.99px;font-size:11px;line-height:14px;letter-spacing:0.4px;left:1202.5px;'>600.20</div>
<div class=t style='top:440.99px;font-size:11px;line-height:14px;letter-spacing:0.4px;right:523.5999999999999px;'>0,00</div>
<div class=t style='top:440.99px;font-size:11px;line-height:14px;letter-spacing:0.4px;left:1402.5px;'>391.20</div>
<div class=t style='top:440.99px;font-size:11px;line-height:14px;letter-spacing:0.4px;right:223.5999999999999px;'>0,00</div>
<div class=t style='top:440.99px;font-size:11px;line-height:14px;letter-spacing:0.4px;left:1702.5px;'>600.18</div>
<div class=t style='top:440.99px;font-size:11px;line-height:14px;letter-spacing:0.4px;right:23.59999999999991px;'>0,00</div>
<div class=t style='top:440.99px;font-size:11px;line-height:14px;letter-spacing:0.4px;left:1902.5px;'>39</div>
<div class=t style='top:462.99px;font-size:11px;line-height:14px;letter-spacing:0.4px;left:-271.8px;width:600px;text-align:center;'>10</div>
<div class=t style='top:462.99px;font-size:11px;line-height:14px;left:48px;'>E-Fatura</div>
<div class=t style='top:462.99px;font-size:11px;line-height:14px;left:148px;'>Istisna</div>
<div class=t style='top:462.99px;font-size:11px;line-height:14px;letter-spacing:0.23px;left:247px;'>EF12024001115...</div>
<div class=t style='top:462.99px;font-size:11px;line-height:14px;letter-spacing:0.4px;left:350.5px;'>6.03.2024</div>
<div class=t style='top:462.99px;font-size:11px;line-height:14px;letter-spacing:-0.2px;left:451px;'>Polat Gıda</div>
<div class=t style='top:462.99px;font-size:11px;line-height:14px;letter-spacing:0.4px;left:525.5px;'>120.11</div>
<div class=t style='top:462.99px;font-size:11px;line-height:14px;letter-spacing:0.4px;right:1123.6px;'>150,00</div>
<div class=t style='top:462.99px;font-size:11px;line-height:14px;letter-spacing:0.4px;right:1023.6px;'>0,00</div>
<div class=t style='top:462.99px;font-size:11px;line-height:14px;letter-spacing:0.4px;right:923.6px;'>150,00</div>
<div class=t style='top:462.99px;font-size:11px;line-height:14px;letter-spacing:0.4px;right:723.5999999999999px;'>0,00</div>
<div class=t style='top:462.99px;font-size:11px;line-height:14px;letter-spacing:0.4px;left:1202.5px;'>600.20</div>
<div class=t style='top:462.99px;font-size:11px;line-height:14px;letter-spacing:0.4px;right:523.5999999999999px;'>0,00</div>
<div class=t style='top:462.99px;font-size:11px;line-height:14px;letter-spacing:0.4px;left:1402.5px;'>391.20</div>
<div class=t style='top:462.99px;font-size:11px;line-height:14px;letter-spacing:0.4px;right:223.5999999999999px;'>0,00</div>
<div class=t style='top:462.99px;font-size:11px;line-height:14px;letter-spacing:0.4px;left:1702.5px;'>600.18</div>
<div class=t style='top:462.99px;font-size:11px;line-height:14px;letter-spacing:0.4px;right:23.59999999999991px;'>0,00</div>
<div class=t style='top:462.99px;font-size:11px;line-height:14px;letter-spacing:0.4px;left:1902.5px;'>39</div>
<div class=t style='top:484.99px;font-size:11px;line-height:14px;letter-spacing:0.4px;left:-271.8px;width:600px;text-align:center;'>11</div>
<div class=t style='top:484.99px;font-size:11px;line-height:14px;left:48px;'>E-Fatura</div>
<div class=t style='top:484.99px;font-size:11px;line-height:14px;left:148px;'>Satış</div>
<div class=t style='top:484.99px;font-size:11px;line-height:14px;letter-spacing:0.23px;left:247px;'>EF12024001115...</div>
<div class=t style='top:484.99px;font-size:11px;line-height:14px;letter-spacing:0.4px;left:350.5px;'>6.03.2024</div>
<div class=t style='top:484.99px;font-size:11px;line-height:14px;letter-spacing:-0.2px;left:451px;'>Deniz Plastik</div>
<div class=t style='top:484.99px;font-size:11px;line-height:14px;letter-spacing:0.4px;left:525.5px;'>120.12</div>
<div class=t style='top:484.99px;font-size:11px;line-height:14px;letter-spacing:0.4px;right:1123.6px;'>3.416,67</div>
<div class=t style='top:484.99px;font-size:11px;line-height:14px;letter-spacing:0.4px;right:1023.6px;'>683,33</div>
<div class=t style='top:484.99px;font-size:11px;line-height:14px;letter-spacing:0.4px;right:923.6px;'>4.100,00</div>
<div class=t style='top:484.99px;font-size:11px;line-height:14px;letter-spacing:0.4px;right:723.5999999999999px;'>3.416,67</div>
<div class=t style='top:484.99px;font-size:11px;line-height:14px;letter-spacing:0.4px;left:1202.5px;'>600.20</div>
<div class=t style='top:484.99px;font-size:11px;line-height:14px;letter-spacing:0.4px;right:523.5999999999999px;'>683,33</div>
<div class=t style='top:484.99px;font-size:11px;line-height:14px;letter-spacing:0.4px;left:1402.5px;'>391.20</div>
<div class=t style='top:484.99px;font-size:11px;line-height:14px;letter-spacing:0.4px;right:223.5999999999999px;'>0,00</div>
<div class=t style='top:484.99px;font-size:11px;line-height:14px;letter-spacing:0.4px;left:1702.5px;'>600.18</div>
<div class=t style='top:484.99px;font-size:11px;line-height:14px;letter-spacing:0.4px;right:23.59999999999991px;'>0,00</div>
<div class=t style='top:484.99px;font-size:11px;line-height:14px;letter-spacing:0.4px;left:1902.5px;'>39</div>
<div class=t style='top:506.99px;font-size:11px;line-height:14px;letter-spacing:0.4px;left:-271.8px;width:600px;text-align:center;'>12</div>
<div class=t style='top:506.99px;font-size:11px;line-height:14px;left:48px;'>E-Arşiv Fatura</div>
<div class=t style='top:506.99px;font-size:11px;line-height:14px;left:148px;'>Satış</div>
<div class=t style='top:506.99px;font-size:11px;line-height:14px;letter-spacing:0.23px;left:247px;'>EA12024001115...</div>
<div class=t style='top:506.99px;font-size:11px;line-height:14px;letter-spacing:0.4px;left:350.5px;'>6.03.2024</div>
<div class=t style='top:506.99px;font-size:11px;line-height:14px;letter-spacing:-0.2px;left:451px;'>Kırlangıç Ki...</div>
<div class=t style='top:506.99px;font-size:11px;line-height:14px;letter-spacing:0.4px;left:525.5px;'>120.13</div>
<div class=t style='top:506.99px;font-size:11px;line-height:14px;letter-spacing:0.4px;right:1123.6px;'>313,14</div>
<div class=t style='top:506.99px;font-size:11px;line-height:14px;letter-spacing:0.4px;right:1023.6px;'>62,63</div>
<div class=t style='top:506.99px;font-size:11px;line-height:14px;letter-spacing:0.4px;right:923.6px;'>375,77</div>
<div class=t style='top:506.99px;font-size:11px;line-height:14px;letter-spacing:0.4px;right:723.5999999999999px;'>313,14</div>
<div class=t style='top:506.99px;font-size:11px;line-height:14px;letter-spacing:0.4px;left:1202.5px;'>600.20</div>
<div class=t style='top:506.99px;font-size:11px;line-height:14px;letter-spacing:0.4px;right:523.5999999999999px;'>62,63</div>
<div class=t style='top:506.99px;font-size:11px;line-height:14px;letter-spacing:0.4px;left:1402.5px;'>391.20</div>
<div class=t style='top:506.99px;font-size:11px;line-height:14px;letter-spacing:0.4px;right:223.5999999999999px;'>0,00</div>
<div class=t style='top:506.99px;font-size:11px;line-height:14px;letter-spacing:0.4px;left:1702.5px;'>600.18</div>
<div class=t style='top:506.99px;font-size:11px;line-height:14px;letter-spacing:0.4px;right:23.59999999999991px;'>0,00</div>
<div class=t style='top:506.99px;font-size:11px;line-height:14px;letter-spacing:0.4px;left:1902.5px;'>39</div>
<div class=t style='top:528.99px;font-size:11px;line-height:14px;letter-spacing:0.4px;left:-271.8px;width:600px;text-align:center;'>13</div>
<div class=t style='top:528.99px;font-size:11px;line-height:14px;left:48px;'>E-Fatura</div>
<div class=t style='top:528.99px;font-size:11px;line-height:14px;left:148px;'>Satış</div>
<div class=t style='top:528.99px;font-size:11px;line-height:14px;letter-spacing:0.23px;left:247px;'>EF12024001115...</div>
<div class=t style='top:528.99px;font-size:11px;line-height:14px;letter-spacing:0.4px;left:350.5px;'>6.03.2024</div>
<div class=t style='top:528.99px;font-size:11px;line-height:14px;letter-spacing:-0.2px;left:451px;'>Durgun İnş...</div>
<div class=t style='top:528.99px;font-size:11px;line-height:14px;letter-spacing:0.4px;left:525.5px;'>120.14</div>
<div class=t style='top:528.99px;font-size:11px;line-height:14px;letter-spacing:0.4px;right:1123.6px;'>901,67</div>
<div class=t style='top:528.99px;font-size:11px;line-height:14px;letter-spacing:0.4px;right:1023.6px;'>180,33</div>
<div class=t style='top:528.99px;font-size:11px;line-height:14px;letter-spacing:0.4px;right:923.6px;'>1.082,00</div>
<div class=t style='top:528.99px;font-size:11px;line-height:14px;letter-spacing:0.4px;right:723.5999999999999px;'>901,67</div>
<div class=t style='top:528.99px;font-size:11px;line-height:14px;letter-spacing:0.4px;left:1202.5px;'>600.20</div>
<div class=t style='top:528.99px;font-size:11px;line-height:14px;letter-spacing:0.4px;right:523.5999999999999px;'>180,33</div>
<div class=t style='top:528.99px;font-size:11px;line-height:14px;letter-spacing:0.4px;left:1402.5px;'>391.20</div>
<div class=t style='top:528.99px;font-size:11px;line-height:14px;letter-spacing:0.4px;right:223.5999999999999px;'>0,00</div>
<div class=t style='top:528.99px;font-size:11px;line-height:14px;letter-spacing:0.4px;left:1702.5px;'>600.18</div>
<div class=t style='top:528.99px;font-size:11px;line-height:14px;letter-spacing:0.4px;right:23.59999999999991px;'>0,00</div>
<div class=t style='top:528.99px;font-size:11px;line-height:14px;letter-spacing:0.4px;left:1902.5px;'>39</div>
<div class=t style='top:550.99px;font-size:11px;line-height:14px;letter-spacing:0.4px;left:-271.8px;width:600px;text-align:center;'>14</div>
<div class=t style='top:550.99px;font-size:11px;line-height:14px;left:48px;'>E-Fatura</div>
<div class=t style='top:550.99px;font-size:11px;line-height:14px;left:148px;'>Satış</div>
<div class=t style='top:550.99px;font-size:11px;line-height:14px;letter-spacing:0.23px;left:247px;'>EF12024001115...</div>
<div class=t style='top:550.99px;font-size:11px;line-height:14px;letter-spacing:0.4px;left:350.5px;'>7.03.2024</div>
<div class=t style='top:550.99px;font-size:11px;line-height:14px;letter-spacing:-0.2px;left:451px;'>Kaptan Ma...</div>
<div class=t style='top:550.99px;font-size:11px;line-height:14px;letter-spacing:0.4px;left:525.5px;'>102.01</div>
<div class=t style='top:550.99px;font-size:11px;line-height:14px;letter-spacing:0.4px;right:1123.6px;'>51.478,63</div>
<div class=t style='top:550.99px;font-size:11px;line-height:14px;letter-spacing:0.4px;right:1023.6px;'>10.295,73</div>
<div class=t style='top:550.99px;font-size:11px;line-height:14px;letter-spacing:0.4px;right:923.6px;'>61.774,36</div>
<div class=t style='top:550.99px;font-size:11px;line-height:14px;letter-spacing:0.4px;right:723.5999999999999px;'>51.478,63</div>
<div class=t style='top:550.99px;font-size:11px;line-height:14px;letter-spacing:0.4px;left:1202.5px;'>600.20</div>
<div class=t style='top:550.99px;font-size:11px;line-height:14px;letter-spacing:0.4px;right:523.5999999999999px;'>10.295,73</div>
<div class=t style='top:550.99px;font-size:11px;line-height:14px;letter-spacing:0.4px;left:1402.5px;'>391.20</div>
<div class=t style='top:550.99px;font-size:11px;line-height:14px;letter-spacing:0.4px;right:223.5999999999999px;'>0,00</div>
<div class=t style='top:550.99px;font-size:11px;line-height:14px;letter-spacing:0.4px;left:1702.5px;'>600.18</div>
<div class=t style='top:550.99px;font-size:11px;line-height:14px;letter-spacing:0.4px;right:23.59999999999991px;'>0,00</div>
<div class=t style='top:550.99px;font-size:11px;line-height:14px;letter-spacing:0.4px;left:1902.5px;'>39</div>
<div class=t style='top:572.99px;font-size:11px;line-height:14px;letter-spacing:0.4px;left:-271.8px;width:600px;text-align:center;'>15</div>
<svg class=a style='left:11px;top:267px' width='6' height='10' viewBox='0 0 6 10'><path d='M0 0L5.6 4.7L0 9.4Z' fill='#404040'/></svg>
<svg class=a style='left:12px;top:575px' width='8' height='8' viewBox='0 0 8 8'><circle cx='4' cy='4' r='2.6' fill='#505050'/></svg>
</div>
<div class=a style='left:4px;top:183px;width:1912px;height:786px;box-shadow:inset 0 0 0 1px #000000;'></div>
<div class=a style='left:520px;top:183px;width:81px;height:388px;box-shadow:inset 0 0 0 3px #C4005A;'></div>
<div class=a style='left:5px;top:951px;width:1910px;height:1px;background:#FFFFFF;'></div>
<div class=a style='left:5px;top:952px;width:1910px;height:15px;background:#F0F0F0;'></div>
<div class=a style='left:5px;top:967px;width:1910px;height:1px;background:#FFFFFF;'></div>
<div class=a style='left:1914px;top:951px;width:1px;height:17px;background:#FFFFFF;'></div>
<div class=a style='left:22px;top:952px;width:722px;height:15px;background:#CDCDCD;'></div>
<svg class=a style='left:9px;top:955px' width='8' height='10' viewBox='0 0 8 10'><path d='M6.3 1.6L2.4 4.8L6.3 8' fill='none' stroke='#505050' stroke-width='2'/></svg>
<svg class=a style='left:1903px;top:955px' width='8' height='10' viewBox='0 0 8 10'><path d='M1.7 1.6L5.6 4.8L1.7 8' fill='none' stroke='#505050' stroke-width='2'/></svg>
<div class=a style='left:1px;top:991px;width:1500px;height:1px;background:#D7D7D7;'></div>
<div class=a style='left:2px;top:994px;width:90px;height:1px;background:#C8C8C8;'></div>
<div class=a style='left:2px;top:994px;width:1px;height:18px;background:#C8C8C8;'></div>
<div class=t style='top:996.72px;font-size:10.9px;line-height:14px;left:7px;'>Fatura Sayısı:14</div>
<div class=a style='left:93px;top:994px;width:1px;height:17px;background:#A0A0A0;'></div>
<div class=a style='left:93px;top:994px;width:73px;height:1px;background:#A0A0A0;'></div>
<div class=a style='left:94px;top:995px;width:70px;height:16px;background:#008000;'></div>
<div class=a style='left:93px;top:1012px;width:73px;height:1px;background:#1E9A1E;'></div>
<div class=a style='left:165px;top:994px;width:1px;height:19px;background:#1E9A1E;'></div>
<div class=t style='top:996.69px;font-size:11px;line-height:14px;color:#FFFFFF;left:100px;'>Bakiye:0,00</div>
<div class=a style='left:166px;top:994px;width:162px;height:1px;background:#C8C8C8;'></div>
<div class=a style='left:166px;top:994px;width:1px;height:18px;background:#C8C8C8;'></div>
<div class=t style='top:996.03px;font-size:11.45px;line-height:15px;left:173.3px;'>Kdv Hariç Toplam:125.130,80</div>
<div class=a style='left:329px;top:994px;width:127px;height:1px;background:#C8C8C8;'></div>
<div class=a style='left:329px;top:994px;width:1px;height:18px;background:#C8C8C8;'></div>
<div class=t style='top:996.03px;font-size:11.45px;line-height:15px;left:337.5px;'>Toplam Kdv:24.780,82</div>
<div class=a style='left:456px;top:994px;width:107px;height:1px;background:#C8C8C8;'></div>
<div class=a style='left:456px;top:994px;width:1px;height:18px;background:#C8C8C8;'></div>
<div class=t style='top:996.03px;font-size:11.45px;line-height:15px;left:464px;'>Diğer Vergiler:0,00</div>
<div class=a style='left:564px;top:994px;width:142px;height:1px;background:#C8C8C8;'></div>
<div class=a style='left:564px;top:994px;width:1px;height:18px;background:#C8C8C8;'></div>
<div class=t style='top:996.03px;font-size:11.45px;line-height:15px;left:572.5px;'>Genel Toplam:149.911,62</div>
<div class=a style='left:707px;top:994px;width:1px;height:18px;background:#C8C8C8;'></div>
<div class=a style='left:711px;top:994px;width:1px;height:18px;background:#C8C8C8;'></div>
<div class=a style='left:1664px;top:985px;width:128px;height:21px;box-shadow:inset 0 0 0 1px #ADADAD;background:#E1E1E1;'></div>
<div class=a style='left:1667px;top:988px;width:122px;height:16px;background:#008000;'></div>
<div class=t style='top:987.94px;font-size:12.3px;line-height:16px;font-weight:700;color:#FFFFFF;left:1428px;width:600px;text-align:center;'>DIŞARI AKTAR - F2</div>
<div class=a style='left:1800px;top:985px;width:115px;height:21px;box-shadow:inset 0 0 0 1px #ADADAD;background:#E1E1E1;'></div>
<div class=a style='left:1803px;top:988px;width:109px;height:16px;background:#D05F5F;'></div>
<div class=t style='top:987.94px;font-size:12.3px;line-height:16px;font-weight:700;color:#FFFFFF;left:1557.5px;width:600px;text-align:center;'>VAZGEÇ - ESC</div>
<div class=a style='left:2px;top:1019px;width:45px;height:1px;background:#C8C8C8;'></div>
<div class=a style='left:2px;top:1019px;width:1px;height:17px;background:#C8C8C8;'></div>
<div class=t style='top:1021.82px;font-size:10.6px;line-height:14px;left:6px;'>DEBUG</div>
<div class=a style='left:49px;top:1019px;width:96px;height:1px;background:#C8C8C8;'></div>
<div class=a style='left:49px;top:1019px;width:1px;height:17px;background:#C8C8C8;'></div>
<div class=t style='top:1021.65px;font-size:11.1px;line-height:14px;left:54px;'>Versiyon : 5.1.0.0</div>
</body></html>
